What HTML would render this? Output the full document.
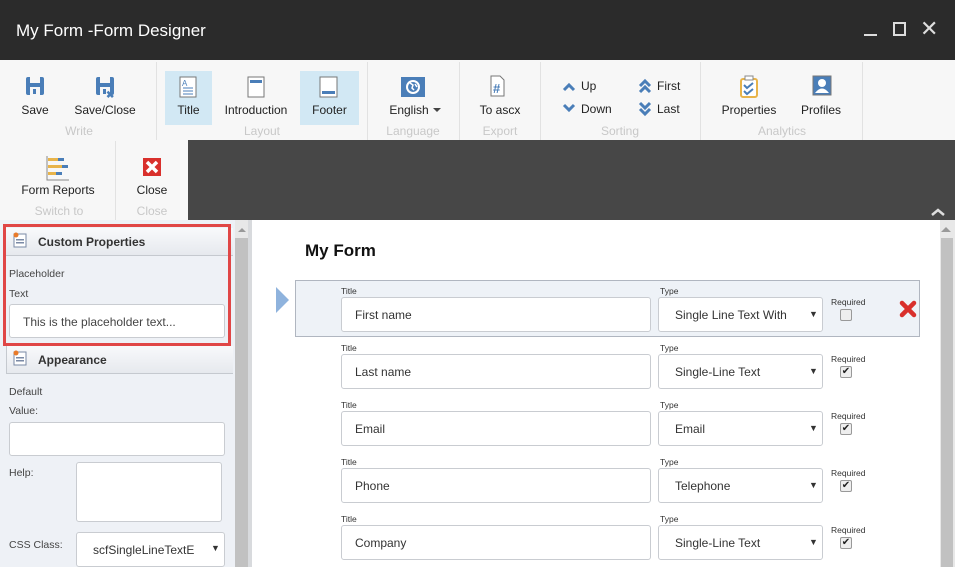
<!DOCTYPE html>
<html><head><style>
*{box-sizing:border-box;margin:0;padding:0}
body{width:955px;height:567px;overflow:hidden;font-family:"Liberation Sans",Arial,sans-serif;background:#fff;position:relative;font-size:12px;color:#222}
.a{position:absolute}
.tb{left:0;top:0;width:955px;height:60px;background:#2b2b2b;color:#fff;font-size:17px}
.rib{left:0;top:60px;width:955px;height:80px;background:#f7f7f7}
.rib2{left:0;top:140px;width:188px;height:80px;background:#f7f7f7}
.dark{left:188px;top:140px;width:767px;height:80px;background:#474747}
.lbl{font-size:12px;color:#222;text-align:center}
.grp{font-size:12px;color:#c8c8c8;text-align:center}
.sep{width:1px;background:#e2e2e2}
.sel{background:#d2e8f4}
.in{background:#fff;border:1px solid #c9ccd1;border-radius:3px}
.tt{font-size:8.5px;color:#333}
.fv{font-size:12px;color:#333}
.cb{width:12px;height:12px;border:1px solid #999;border-radius:2px;background:#eee;font-size:10px;line-height:10px;text-align:center;color:#222}
</style></head><body>
<div class="a tb"><div class="a" style="left:16px;top:21px">My Form -Form Designer</div>
<div class="a" style="left:864px;top:34px;width:13px;height:2px;background:#ddd"></div>
<div class="a" style="left:893px;top:22px;width:13px;height:14px;border:2px solid #ddd"></div>
<div class="a" style="left:920px;top:16px;font-size:22px;color:#ddd">✕</div></div>
<div class="a rib"></div><div class="a rib2"></div><div class="a dark"></div>
<div class="a sep" style="left:156px;top:62px;height:78px"></div>
<div class="a sep" style="left:367px;top:62px;height:78px"></div>
<div class="a sep" style="left:459px;top:62px;height:78px"></div>
<div class="a sep" style="left:540px;top:62px;height:78px"></div>
<div class="a sep" style="left:700px;top:62px;height:78px"></div>
<div class="a sep" style="left:862px;top:62px;height:78px"></div>
<div class="a sep" style="left:115px;top:141px;height:79px"></div>
<div class="a sel" style="left:165px;top:71px;width:47px;height:54px"></div>
<div class="a sel" style="left:300px;top:71px;width:59px;height:54px"></div>
<svg class="a" style="left:0;top:60px" width="955" height="160">
<g fill="#4a7eb8"><rect x="26" y="17" width="18" height="18" rx="2"/><rect x="96" y="17" width="18" height="18" rx="2"/></g>
<g fill="#f7f7f7"><rect x="30" y="17" width="10" height="6"/><rect x="30" y="27" width="10" height="8"/><rect x="100" y="17" width="10" height="6"/><rect x="100" y="27" width="10" height="8"/></g>
<rect x="33" y="29" width="3" height="5" fill="#4a7eb8"/><rect x="103" y="29" width="3" height="5" fill="#4a7eb8"/>
<text x="106" y="38" font-size="10" fill="#4a7eb8" font-weight="bold" font-family="Liberation Sans">✖</text>
<rect x="180" y="17" width="16" height="20" fill="#fff" stroke="#777"/><g stroke="#4a7eb8"><line x1="183" y1="28" x2="193" y2="28"/><line x1="183" y1="31" x2="193" y2="31"/><line x1="183" y1="34" x2="193" y2="34"/></g><text x="182" y="26" font-size="8" fill="#4a7eb8" font-family="Liberation Sans">A</text>
<rect x="248" y="17" width="16" height="20" fill="#fff" stroke="#777"/><rect x="250" y="20" width="12" height="3" fill="#4a7eb8"/>
<rect x="320" y="17" width="17" height="20" fill="#fff" stroke="#777"/><rect x="322" y="31" width="13" height="3" fill="#4a7eb8"/>
<rect x="401" y="17" width="24" height="20" fill="#4a7eb8"/><circle cx="413" cy="27" r="7" fill="#fff"/><circle cx="413" cy="27" r="5" fill="#4a7eb8"/><path d="M410 23l3 2-1 3 2 2M415 24l2 3" stroke="#fff" stroke-width="1.5" fill="none"/>
<path d="M433 48l8 0-4 4z" fill="#444"/>
<path d="M491 16h9l4 4v16h-13z" fill="#fff" stroke="#777"/><text x="493" y="33" font-size="13" font-weight="bold" fill="#4a7eb8" font-family="Liberation Sans">#</text>
<g stroke="#4a7eb8" stroke-width="3" fill="none"><path d="M564 30l5-5 5 5"/><path d="M564 45l5 5 5-5"/><path d="M640 26l5-5 5 5M640 32l5-5 5 5"/><path d="M640 43l5 5 5-5M640 49l5 5 5-5"/></g>
<rect x="741" y="19" width="16" height="18" rx="2" fill="#fff" stroke="#e8b44a" stroke-width="2"/><rect x="745" y="16" width="8" height="4" fill="#fff" stroke="#888"/><path d="M744 25l3 3 6-5M744 31l3 3 6-5" stroke="#4a7eb8" stroke-width="2" fill="none"/>
<rect x="813" y="16" width="18" height="19" fill="#4a7eb8" stroke="#777"/><circle cx="822" cy="23" r="4" fill="#fff"/><path d="M815 33q7-9 14 0z" fill="#fff"/>
<g transform="translate(0,80)"><g fill="#e8b44a"><rect x="48" y="18" width="10" height="3"/><rect x="48" y="25" width="14" height="3"/><rect x="48" y="32" width="8" height="3"/></g><g fill="#4a7eb8"><rect x="58" y="18" width="6" height="3"/><rect x="62" y="25" width="6" height="3"/><rect x="56" y="32" width="6" height="3"/></g><path d="M47 16v24h22" stroke="#888" fill="none"/>
<rect x="143" y="18" width="18" height="18" fill="#d9302c"/><path d="M147 22l10 10M157 22l-10 10" stroke="#fff" stroke-width="3.5"/></g>
<path d="M932 155l6-5 6 5" stroke="#ddd" stroke-width="2.5" fill="none"/>
</svg>
<div class="a lbl" style="left:10px;top:103px;width:50px">Save</div>
<div class="a lbl" style="left:68px;top:103px;width:74px">Save/Close</div>
<div class="a grp" style="left:50px;top:124px;width:58px">Write</div>
<div class="a lbl" style="left:165px;top:103px;width:47px">Title</div>
<div class="a lbl" style="left:218px;top:103px;width:76px">Introduction</div>
<div class="a lbl" style="left:300px;top:103px;width:59px">Footer</div>
<div class="a grp" style="left:232px;top:124px;width:60px">Layout</div>
<div class="a lbl" style="left:382px;top:103px;width:54px">English</div>
<div class="a grp" style="left:380px;top:124px;width:66px">Language</div>
<div class="a lbl" style="left:470px;top:103px;width:60px">To ascx</div>
<div class="a grp" style="left:470px;top:124px;width:60px">Export</div>
<div class="a lbl" style="left:581px;top:79px">Up</div><div class="a lbl" style="left:581px;top:102px">Down</div>
<div class="a lbl" style="left:657px;top:79px">First</div><div class="a lbl" style="left:657px;top:102px">Last</div>
<div class="a grp" style="left:590px;top:124px;width:60px">Sorting</div>
<div class="a lbl" style="left:716px;top:103px;width:66px">Properties</div>
<div class="a lbl" style="left:796px;top:103px;width:50px">Profiles</div>
<div class="a grp" style="left:752px;top:124px;width:60px">Analytics</div>
<div class="a lbl" style="left:14px;top:183px;width:88px">Form Reports</div>
<div class="a grp" style="left:20px;top:204px;width:78px">Switch to</div>
<div class="a lbl" style="left:126px;top:183px;width:52px">Close</div>
<div class="a grp" style="left:126px;top:204px;width:52px">Close</div>
<div class="a" style="left:0;top:220px;width:236px;height:347px;background:#eef1f6"></div>
<div class="a" style="left:235px;top:220px;width:13px;height:347px;background:#e8e8e8"></div>
<div class="a" style="left:235px;top:238px;width:13px;height:329px;background:#c1c1c1"></div>
<div class="a" style="left:248px;top:220px;width:4px;height:347px;background:#d8dadd"></div>
<div class="a" style="left:6px;top:228px;width:227px;height:28px;background:linear-gradient(#f8f9fb,#e6e9ee);border-bottom:1px solid #c5c9cf"></div>
<div class="a" style="left:6px;top:346px;width:227px;height:28px;background:linear-gradient(#f8f9fb,#e6e9ee);border-bottom:1px solid #c5c9cf;border-left:1px solid #c5c9cf"></div>
<svg class="a" style="left:0;top:220px" width="240" height="170"><g><rect x="14" y="14" width="12" height="13" fill="#fff" stroke="#7a8aa6"/><rect x="16" y="19" width="8" height="1.5" fill="#7a8aa6"/><rect x="16" y="22" width="8" height="1.5" fill="#7a8aa6"/><circle cx="16" cy="15" r="2.5" fill="#e87a2a"/></g><g transform="translate(0,118)"><rect x="14" y="14" width="12" height="13" fill="#fff" stroke="#7a8aa6"/><rect x="16" y="19" width="8" height="1.5" fill="#7a8aa6"/><rect x="16" y="22" width="8" height="1.5" fill="#7a8aa6"/><circle cx="16" cy="15" r="2.5" fill="#e87a2a"/></g></svg>
<div class="a" style="left:38px;top:235px;font-size:12px;font-weight:bold;color:#333">Custom Properties</div>
<div class="a" style="left:38px;top:353px;font-size:12px;font-weight:bold;color:#333">Appearance</div>
<div class="a" style="left:9px;top:268px;font-size:10.5px;color:#444">Placeholder</div>
<div class="a" style="left:9px;top:288px;font-size:10.5px;color:#444">Text</div>
<div class="a in" style="left:9px;top:304px;width:216px;height:34px;padding:10px 0 0 13px;font-size:12px;color:#444">This is the placeholder text...</div>
<div class="a" style="left:3px;top:224px;width:228px;height:122px;border:3px solid #e04646"></div>
<div class="a" style="left:9px;top:386px;font-size:10.5px;color:#444">Default</div>
<div class="a" style="left:9px;top:405px;font-size:10.5px;color:#444">Value:</div>
<div class="a in" style="left:9px;top:422px;width:216px;height:34px"></div>
<div class="a" style="left:9px;top:467px;font-size:10.5px;color:#444">Help:</div>
<div class="a in" style="left:76px;top:462px;width:146px;height:60px"></div>
<div class="a" style="left:9px;top:539px;font-size:10.5px;color:#444">CSS Class:</div>
<div class="a in" style="left:76px;top:532px;width:149px;height:35px;padding:10px 0 0 16px;font-size:12px;color:#333">scfSingleLineTextE<span class="a" style="left:134px;top:10px;font-size:9px">▼</span></div>
<div class="a" style="left:940px;top:220px;width:15px;height:347px;background:#e8e8e8"></div>
<div class="a" style="left:941px;top:238px;width:12px;height:329px;background:#c1c1c1"></div>
<svg class="a" style="left:235px;top:222px" width="720" height="14"><path d="M3 10l4-4 4 4z" fill="#999"/><path d="M706 10l5-5 5 5z" fill="#999"/></svg>
<div class="a" style="left:305px;top:241px;font-size:17px;font-weight:bold;color:#111">My Form</div>
<div class="a" style="left:295px;top:280px;width:625px;height:57px;background:#eef2f7;border:1px solid #b0b6c0"></div>
<svg class="a" style="left:275px;top:287px" width="16" height="28"><path d="M1 0l13 13-13 13z" fill="#8fb3dd"/></svg>
<svg class="a" style="left:899px;top:300px" width="18" height="18"><path d="M3 3l12 12M15 3l-12 12" stroke="#d9302c" stroke-width="4.5" stroke-linecap="round"/></svg>
<div id="rows"></div>
<script>
var d=[["First name","Single Line Text With",0],["Last name","Single-Line Text",1],["Email","Email",1],["Phone","Telephone",1],["Company","Single-Line Text",1]];
var h="";d.forEach(function(r,i){var y=280+i*57;
h+='<div class="a tt" style="left:341px;top:'+(y+6)+'px">Title</div><div class="a tt" style="left:660px;top:'+(y+6)+'px">Type</div>'+
'<div class="a in fv" style="left:341px;top:'+(y+17)+'px;width:310px;height:35px;padding:10px 0 0 13px">'+r[0]+'</div>'+
'<div class="a in fv" style="left:658px;top:'+(y+17)+'px;width:165px;height:35px;padding:10px 0 0 16px">'+r[1]+'<span class="a" style="left:150px;top:11px;font-size:9px">▼</span></div>'+
'<div class="a tt" style="left:831px;top:'+(y+17)+'px">Required</div><div class="a cb" style="left:840px;top:'+(y+29)+'px">'+(r[2]?'✔':'')+'</div>';});
document.getElementById("rows").innerHTML=h;
</script>
</body></html>
